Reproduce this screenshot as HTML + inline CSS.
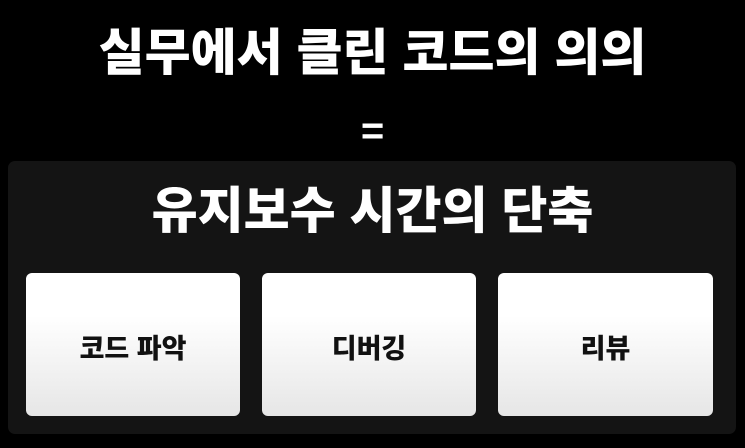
<!DOCTYPE html>
<html><head><meta charset="utf-8"><style>
html,body{margin:0;padding:0;background:#000;width:745px;height:448px;overflow:hidden;font-family:"Liberation Sans","Noto Sans CJK KR",sans-serif;font-weight:900}
.t{position:absolute;left:0;width:745px;text-align:center;color:#fff}
.panel{position:absolute;left:8px;top:161px;width:728px;height:273px;background:#141414;border-radius:7px}
.card{position:absolute;top:273px;width:214px;height:143px;border-radius:6px;background:linear-gradient(#fff 30%,#e6e6e6);display:flex;align-items:center;justify-content:center;font-size:27px;color:#111;padding-top:3px;box-sizing:border-box}
</style></head><body>
<div class="t" style="top:24px;font-size:50px;line-height:58px">실무에서 클린 코드의 의의</div>
<div class="t" style="top:107px;font-size:40px;line-height:48px">=</div>
<div class="panel"></div>
<div class="t" style="top:182px;font-size:50px;line-height:58px">유지보수 시간의 단축</div>
<div class="card" style="left:26px">코드 파악</div>
<div class="card" style="left:262px">디버깅</div>
<div class="card" style="left:498px;width:215px">리뷰</div>
</body></html>
